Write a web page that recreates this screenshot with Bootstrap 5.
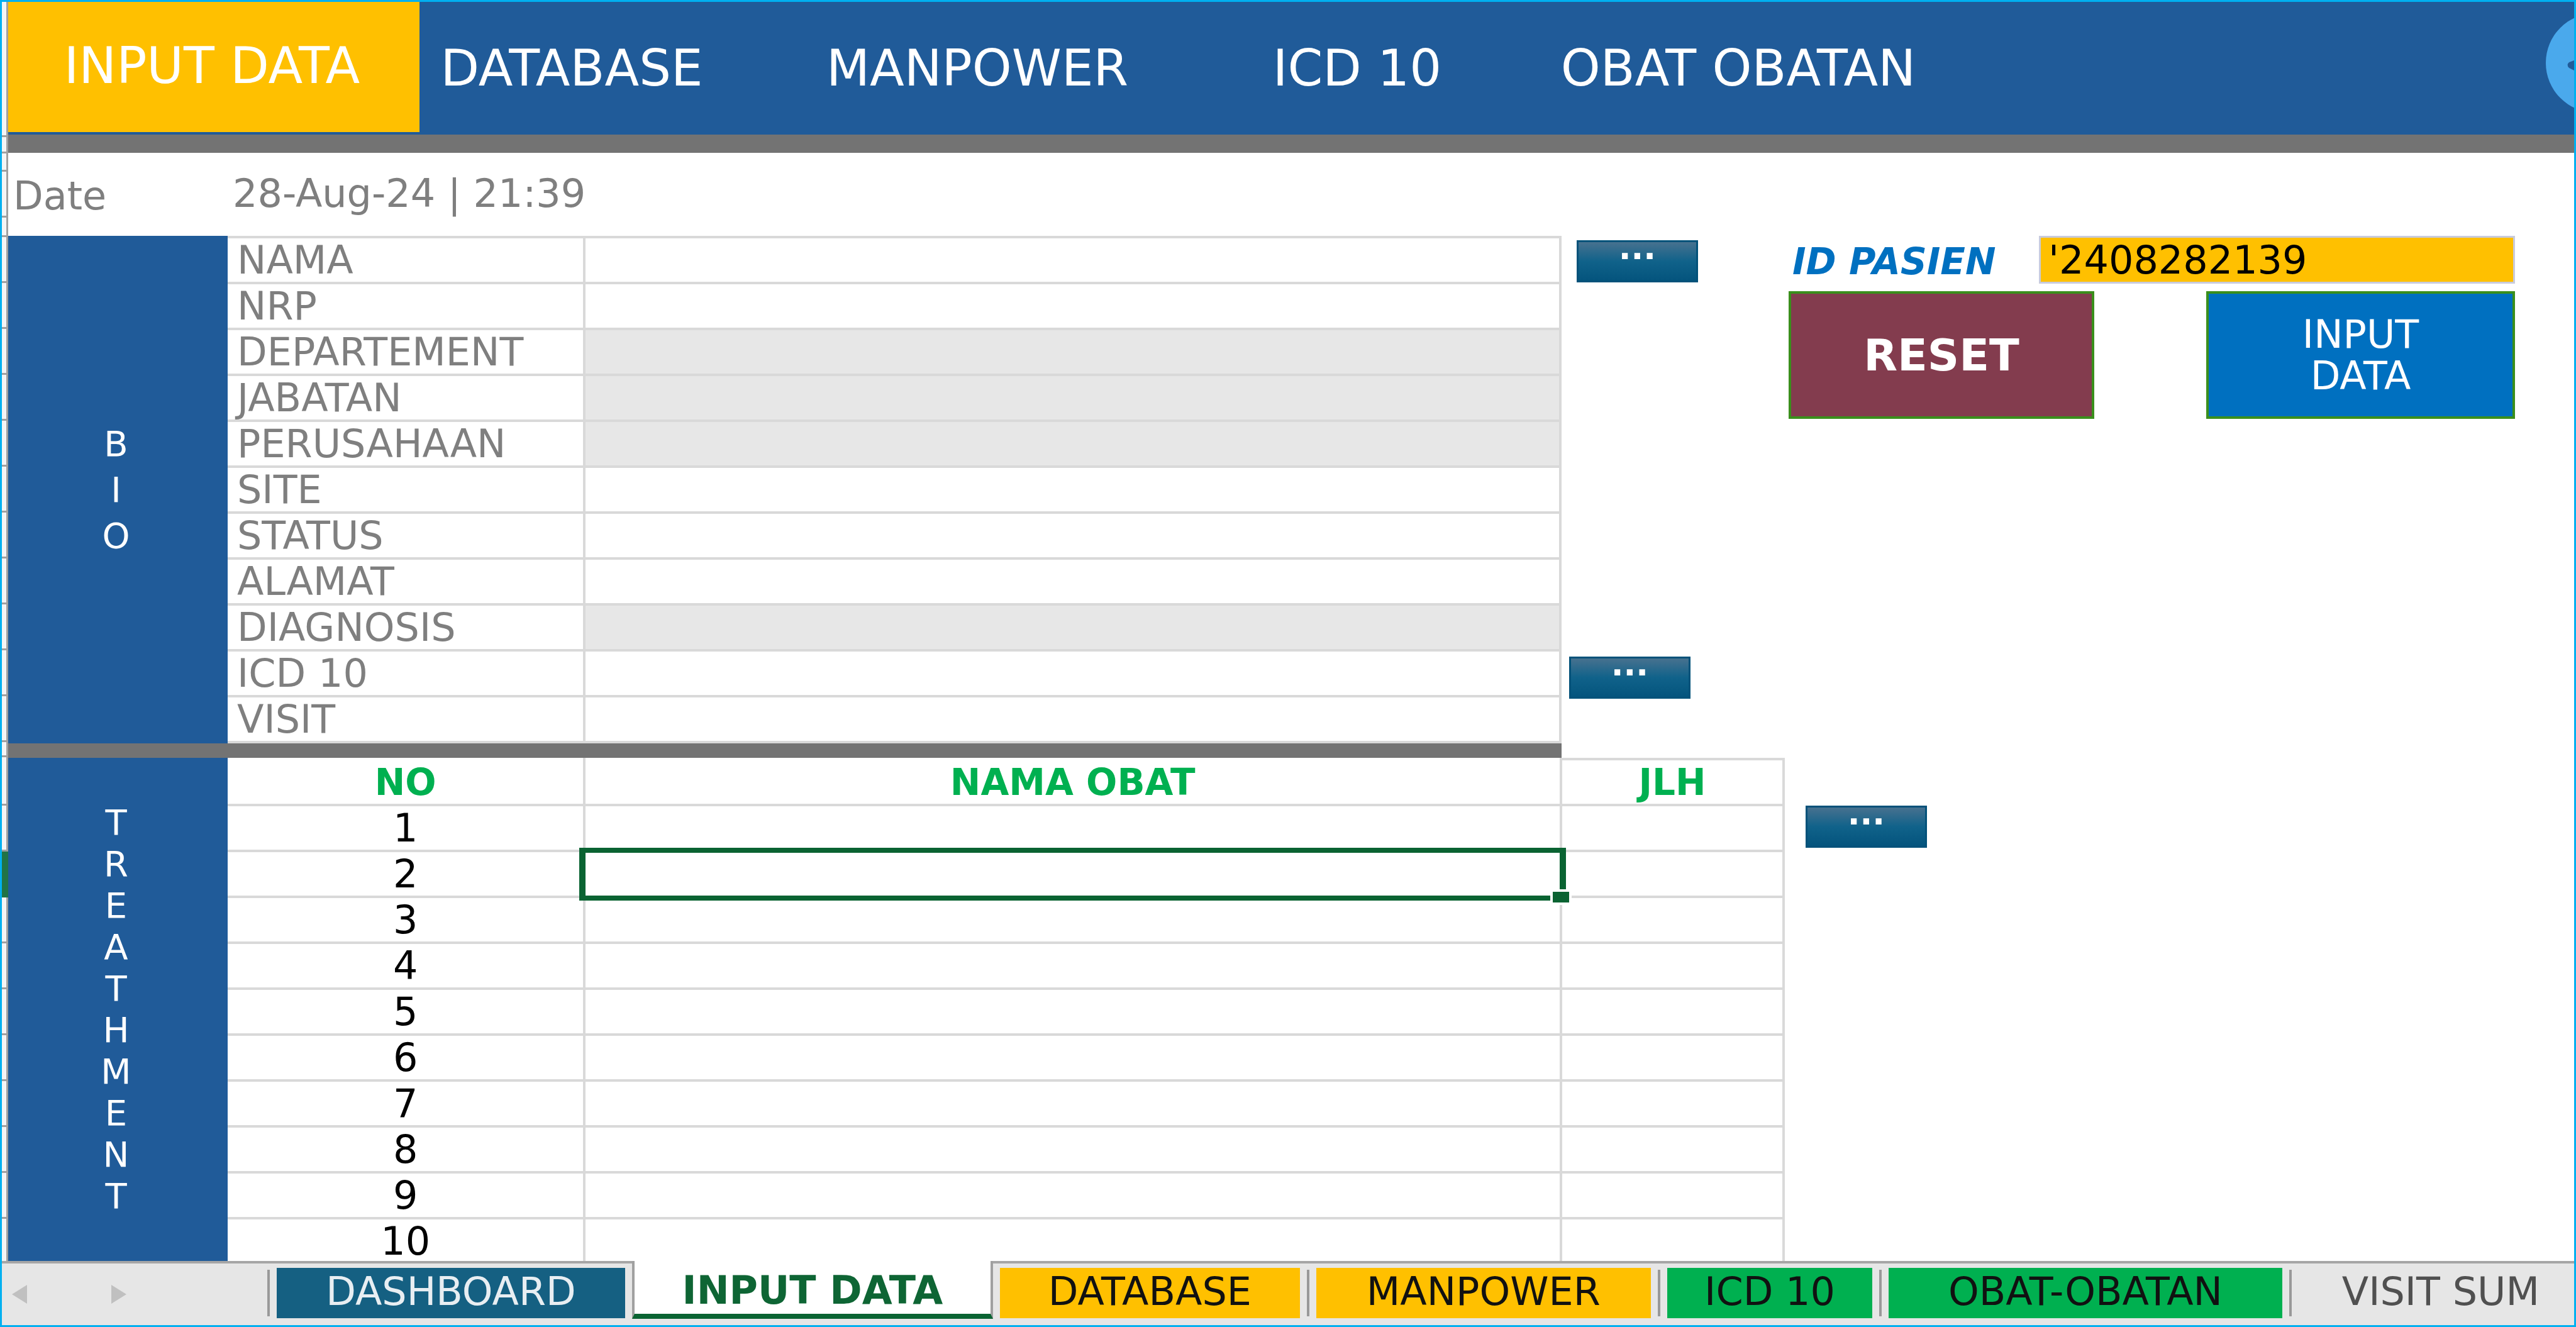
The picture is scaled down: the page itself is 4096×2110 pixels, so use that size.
<!DOCTYPE html>
<html lang="id">
<head>
<meta charset="utf-8">
<meta name="viewport" content="width=device-width, initial-scale=1">
<title>Input Data</title>
<link href="https://cdn.jsdelivr.net/npm/bootstrap@5.3.0/dist/css/bootstrap.min.css" rel="stylesheet">
<style>
  :root { --blue: #205b99; --amber: #ffc000; --line: #d9d9d9; --bar: #737373; --pick: #0a6332; }
  body { font-family: "DejaVu Sans", sans-serif; font-size: 62px; line-height: 66px; color: #000; }
  .frame { border: 3px solid #00b0f0; }

  /* row header strip on the far left */
  .gutter { width: 10px; border-right: 3px solid #a0a0a0; background: #f5f5f5; }
  .gutter div { flex: none; border-bottom: 3px solid #a0a0a0; height: 73px; }
  .gutter .g-top { height: 215px; }
  .gutter .g-bar { height: 26px; }
  .gutter .g-rule { height: 24px; }
  .gutter .g-head { height: 77px; }
  .gutter .g-date { height: 29px; }
  .gutter .g-free { height: 31px; }
  .gutter .g-on { background: #217346; width: 10px; border-color: #217346; }

  .split { display: grid; }
  .topnav { grid-template-columns: 654fr 484fr 806fr 402fr 810fr 924fr; height: 211px; background: var(--blue); padding-bottom: 4px; font-size: 80px; line-height: 80px; }
  .topnav a { color: #fff; text-decoration: none; display: flex; align-items: center; justify-content: center; white-space: nowrap; min-width: 0; padding-top: 4px; }
  .topnav .here { background: var(--amber); padding: 0 6px 4px 0; }
  .avatar { width: 45px; height: 158px; margin-top: 18px; }
  .greybar { height: 29px; background: var(--bar); }
  .daterow { height: 132px; color: #7f7f7f; padding-top: 32px; }

  .bio { grid-template-columns: 349fr 2121fr 361fr 1155fr 94fr; }
  .rule { grid-template-columns: 2470fr 1610fr; height: 23px; }
  .rule div { background: var(--bar); }
  .treat { grid-template-columns: 349fr 2476fr 1255fr; }
  .side { background: var(--blue); color: #fff; font-size: 56px; padding-right: 6px; }
  .side-bio span { line-height: 73px; }

  .field { grid-template-columns: 569fr 1552fr; height: 73px; border-bottom: 4px solid var(--line); }
  .fields { border-top: 4px solid var(--line); }
  .field label { border-right: 4px solid var(--line); padding: 2px 0 0 15px; color: #7f7f7f; white-space: nowrap; min-width: 0; }
  .field input { min-width: 0; border: 0; border-right: 4px solid var(--line); border-radius: 0; padding: 0 15px; background: #fff; }
  .field input[readonly] { background: #e7e7e7; }

  .look { width: 193px; height: 67px; padding: 0; border: 3px solid #03527a; border-radius: 0; color: #fff; font-size: 52px; font-weight: 700; line-height: 18px;
          background: linear-gradient(#47718f, #10628a 50%, #04547d); display: flex; align-items: flex-start; justify-content: center; }
  .look-name { margin: 7px 0 0 24px; }
  .look-icd { margin: 595px 0 0 12px; }
  .look-drug { margin: 76px 0 0 33px; }

  .pid { grid-template-columns: 398fr 757fr; }
  .pid label { font-size: 58px; font-weight: 700; font-style: italic; color: #0070c0; padding: 8px 0 0 6px; white-space: nowrap; }
  .pid input { min-width: 0; height: 76px; border: 3px solid #c8cbdc; border-radius: 0; background: var(--amber); padding: 0 12px; }
  .acts { grid-template-columns: 486fr 178fr 491fr; }
  .act { height: 203px; border: 4px solid #3a8f1c; border-radius: 0; color: #fff; line-height: 66px; }
  .act-reset { background: #833c4e; font-size: 70px; font-weight: 700; }
  .act-save { grid-column: 3; background: #0070c0; }

  .drugs { table-layout: fixed; width: 100%; border-collapse: separate; border-spacing: 0; text-align: center; }
  .drugs th, .drugs td { height: 73px; padding: 0; border: 0 solid var(--line); border-width: 0 4px 4px 0; line-height: 66px; }
  .drugs th { height: 77px; color: #00b050; font-size: 58px; padding-top: 4px; }
  .drugs th:last-child { border-top-width: 4px; padding-top: 0; }
  .drugs tr:last-child td { height: 66px; border-bottom: 0; line-height: 62px; padding-top: 4px; }
  .drugs .c-no { width: 23%; } .drugs .c-qty { width: 14.3%; }
  .cursor { position: absolute; inset: -7px -10px -8px -10px; border: 8px solid var(--pick); border-width: 8px 10px; }
  .cursor::after { content: ""; position: absolute; right: -19px; bottom: -15px; width: 34px; height: 25px; background: var(--pick); border: 4px solid #fff; }

  .sheets { display: grid; grid-template-columns: 411fr 4px 553fr 574fr 476fr 4px 532fr 4px 326fr 4px 625fr 4px 438fr;
            height: 102px; column-gap: 11px; background: #e6e6e6; border-top: 4px solid #a6a6a6; line-height: 66px; }
  .sheets a { margin-top: 7px; height: 80px; display: flex; align-items: center; justify-content: center; padding-bottom: 4px; white-space: nowrap; text-decoration: none; color: #111; min-width: 0; }
  .sheets i { height: 74px; margin-top: 10px; background: #999; }
  .arrows { gap: 134px; }
  .arrows button { border: 0; padding: 0; background: none; width: 24px; line-height: 0; }
  .sheets .t-dash { background: #156082; color: #e8eef2; }
  .sheets .t-on { background: #fff; color: #0e6534; font-weight: 700; margin-top: -4px; height: 92px; border: 4px solid #a0a0a0; border-width: 0 4px 8px; border-bottom-color: var(--pick); padding-top: 14px; }
  .sheets .t-db, .sheets .t-mp { background: var(--amber); }
  .sheets .t-icd, .sheets .t-obat { background: #00b050; }
  .sheets .t-visit { color: #505050; padding-left: 14px; }
</style>
</head>
<body>
<div class="frame min-vh-100 d-flex flex-column overflow-hidden">
  <div class="d-flex flex-grow-1">
    <div class="gutter d-flex flex-column flex-shrink-0" aria-hidden="true">
      <div class="g-top"></div><div class="g-bar"></div><div class="g-date"></div><div></div><div class="g-free"></div>
      <div></div><div></div><div></div><div></div><div></div><div></div><div></div><div></div><div></div><div></div><div></div>
      <div class="g-rule"></div><div class="g-head"></div>
      <div></div><div class="g-on"></div><div></div><div></div><div></div><div></div><div></div><div></div><div></div>
    </div>

    <div class="flex-grow-1">
      <nav class="topnav split">
        <a class="here" href="#input">INPUT DATA</a>
        <a href="#database">DATABASE</a>
        <a href="#manpower">MANPOWER</a>
        <a href="#icd">ICD 10</a>
        <a href="#obat">OBAT OBATAN</a>
        <div class="d-flex justify-content-end">
          <svg class="avatar" viewBox="0 0 45 158" aria-hidden="true">
            <circle cx="79" cy="79" r="79" fill="#4aa9ec"/>
            <path d="M45 75 L37 78 Q32 82 37 87 L45 91Z" fill="#205b99"/>
          </svg>
        </div>
      </nav>
      <div class="greybar"></div>

      <main>
        <div class="daterow split treat">
          <div class="ps-2 pt-1">Date</div>
          <div class="ps-2">28-Aug-24 | 21:39</div>
        </div>

        <form class="split bio">
          <div class="side side-bio d-flex flex-column align-items-center justify-content-center"><span>B</span><span>I</span><span>O</span></div>
          <div class="fields">
            <div class="field split"><label for="nama">NAMA</label><input id="nama" type="text"></div>
            <div class="field split"><label for="nrp">NRP</label><input id="nrp" type="text"></div>
            <div class="field split"><label for="dep">DEPARTEMENT</label><input id="dep" type="text" readonly></div>
            <div class="field split"><label for="jab">JABATAN</label><input id="jab" type="text" readonly></div>
            <div class="field split"><label for="per">PERUSAHAAN</label><input id="per" type="text" readonly></div>
            <div class="field split"><label for="site">SITE</label><input id="site" type="text"></div>
            <div class="field split"><label for="stat">STATUS</label><input id="stat" type="text"></div>
            <div class="field split"><label for="alm">ALAMAT</label><input id="alm" type="text"></div>
            <div class="field split"><label for="diag">DIAGNOSIS</label><input id="diag" type="text" readonly></div>
            <div class="field split"><label for="icd10">ICD 10</label><input id="icd10" type="text"></div>
            <div class="field split"><label for="visit">VISIT</label><input id="visit" type="text"></div>
          </div>
          <div>
            <button class="look look-name" type="button">...</button>
            <button class="look look-icd" type="button">...</button>
          </div>
          <div>
            <div class="pid split"><label for="pid">ID PASIEN</label><input id="pid" type="text" value="'2408282139"></div>
            <div class="acts split mt-2 pt-1">
              <button class="act act-reset" type="reset">RESET</button>
              <button class="act act-save" type="button">INPUT<br>DATA</button>
            </div>
          </div>
        </form>

        <div class="rule split"><div></div></div>

        <section class="split treat">
          <div class="side d-flex flex-column align-items-center justify-content-center">
            <span>T</span><span>R</span><span>E</span><span>A</span><span>T</span><span>H</span><span>M</span><span>E</span><span>N</span><span>T</span>
          </div>
          <table class="drugs">
            <colgroup><col class="c-no"><col><col class="c-qty"></colgroup>
            <thead><tr><th>NO</th><th>NAMA OBAT</th><th>JLH</th></tr></thead>
            <tbody>
              <tr><td>1</td><td></td><td></td></tr>
              <tr><td>2</td><td class="position-relative"><div class="cursor"></div></td><td></td></tr>
              <tr><td>3</td><td></td><td></td></tr>
              <tr><td>4</td><td></td><td></td></tr>
              <tr><td>5</td><td></td><td></td></tr>
              <tr><td>6</td><td></td><td></td></tr>
              <tr><td>7</td><td></td><td></td></tr>
              <tr><td>8</td><td></td><td></td></tr>
              <tr><td>9</td><td></td><td></td></tr>
              <tr><td>10</td><td></td><td></td></tr>
            </tbody>
          </table>
          <div><button class="look look-drug" type="button">...</button></div>
        </section>
      </main>
    </div>
  </div>

  <nav class="sheets mt-auto">
    <div class="arrows d-flex align-items-center ps-3">
      <button type="button" aria-label="Sebelumnya"><svg width="24" height="30" viewBox="0 0 24 30"><path d="M24 0V30L0 15Z" fill="#c0c0c0"/></svg></button>
      <button type="button" aria-label="Berikutnya"><svg width="24" height="30" viewBox="0 0 24 30"><path d="M0 0V30L24 15Z" fill="#c0c0c0"/></svg></button>
    </div>
    <i></i>
    <a class="t-dash" href="#dashboard">DASHBOARD</a>
    <a class="t-on" href="#input">INPUT DATA</a>
    <a class="t-db" href="#database">DATABASE</a>
    <i></i>
    <a class="t-mp" href="#manpower">MANPOWER</a>
    <i></i>
    <a class="t-icd" href="#icd">ICD 10</a>
    <i></i>
    <a class="t-obat" href="#obat">OBAT-OBATAN</a>
    <i></i>
    <a class="t-visit" href="#visitsum">VISIT SUM</a>
  </nav>
</div>
<script src="https://cdn.jsdelivr.net/npm/bootstrap@5.3.0/dist/js/bootstrap.bundle.min.js"></script>
</body>
</html>
